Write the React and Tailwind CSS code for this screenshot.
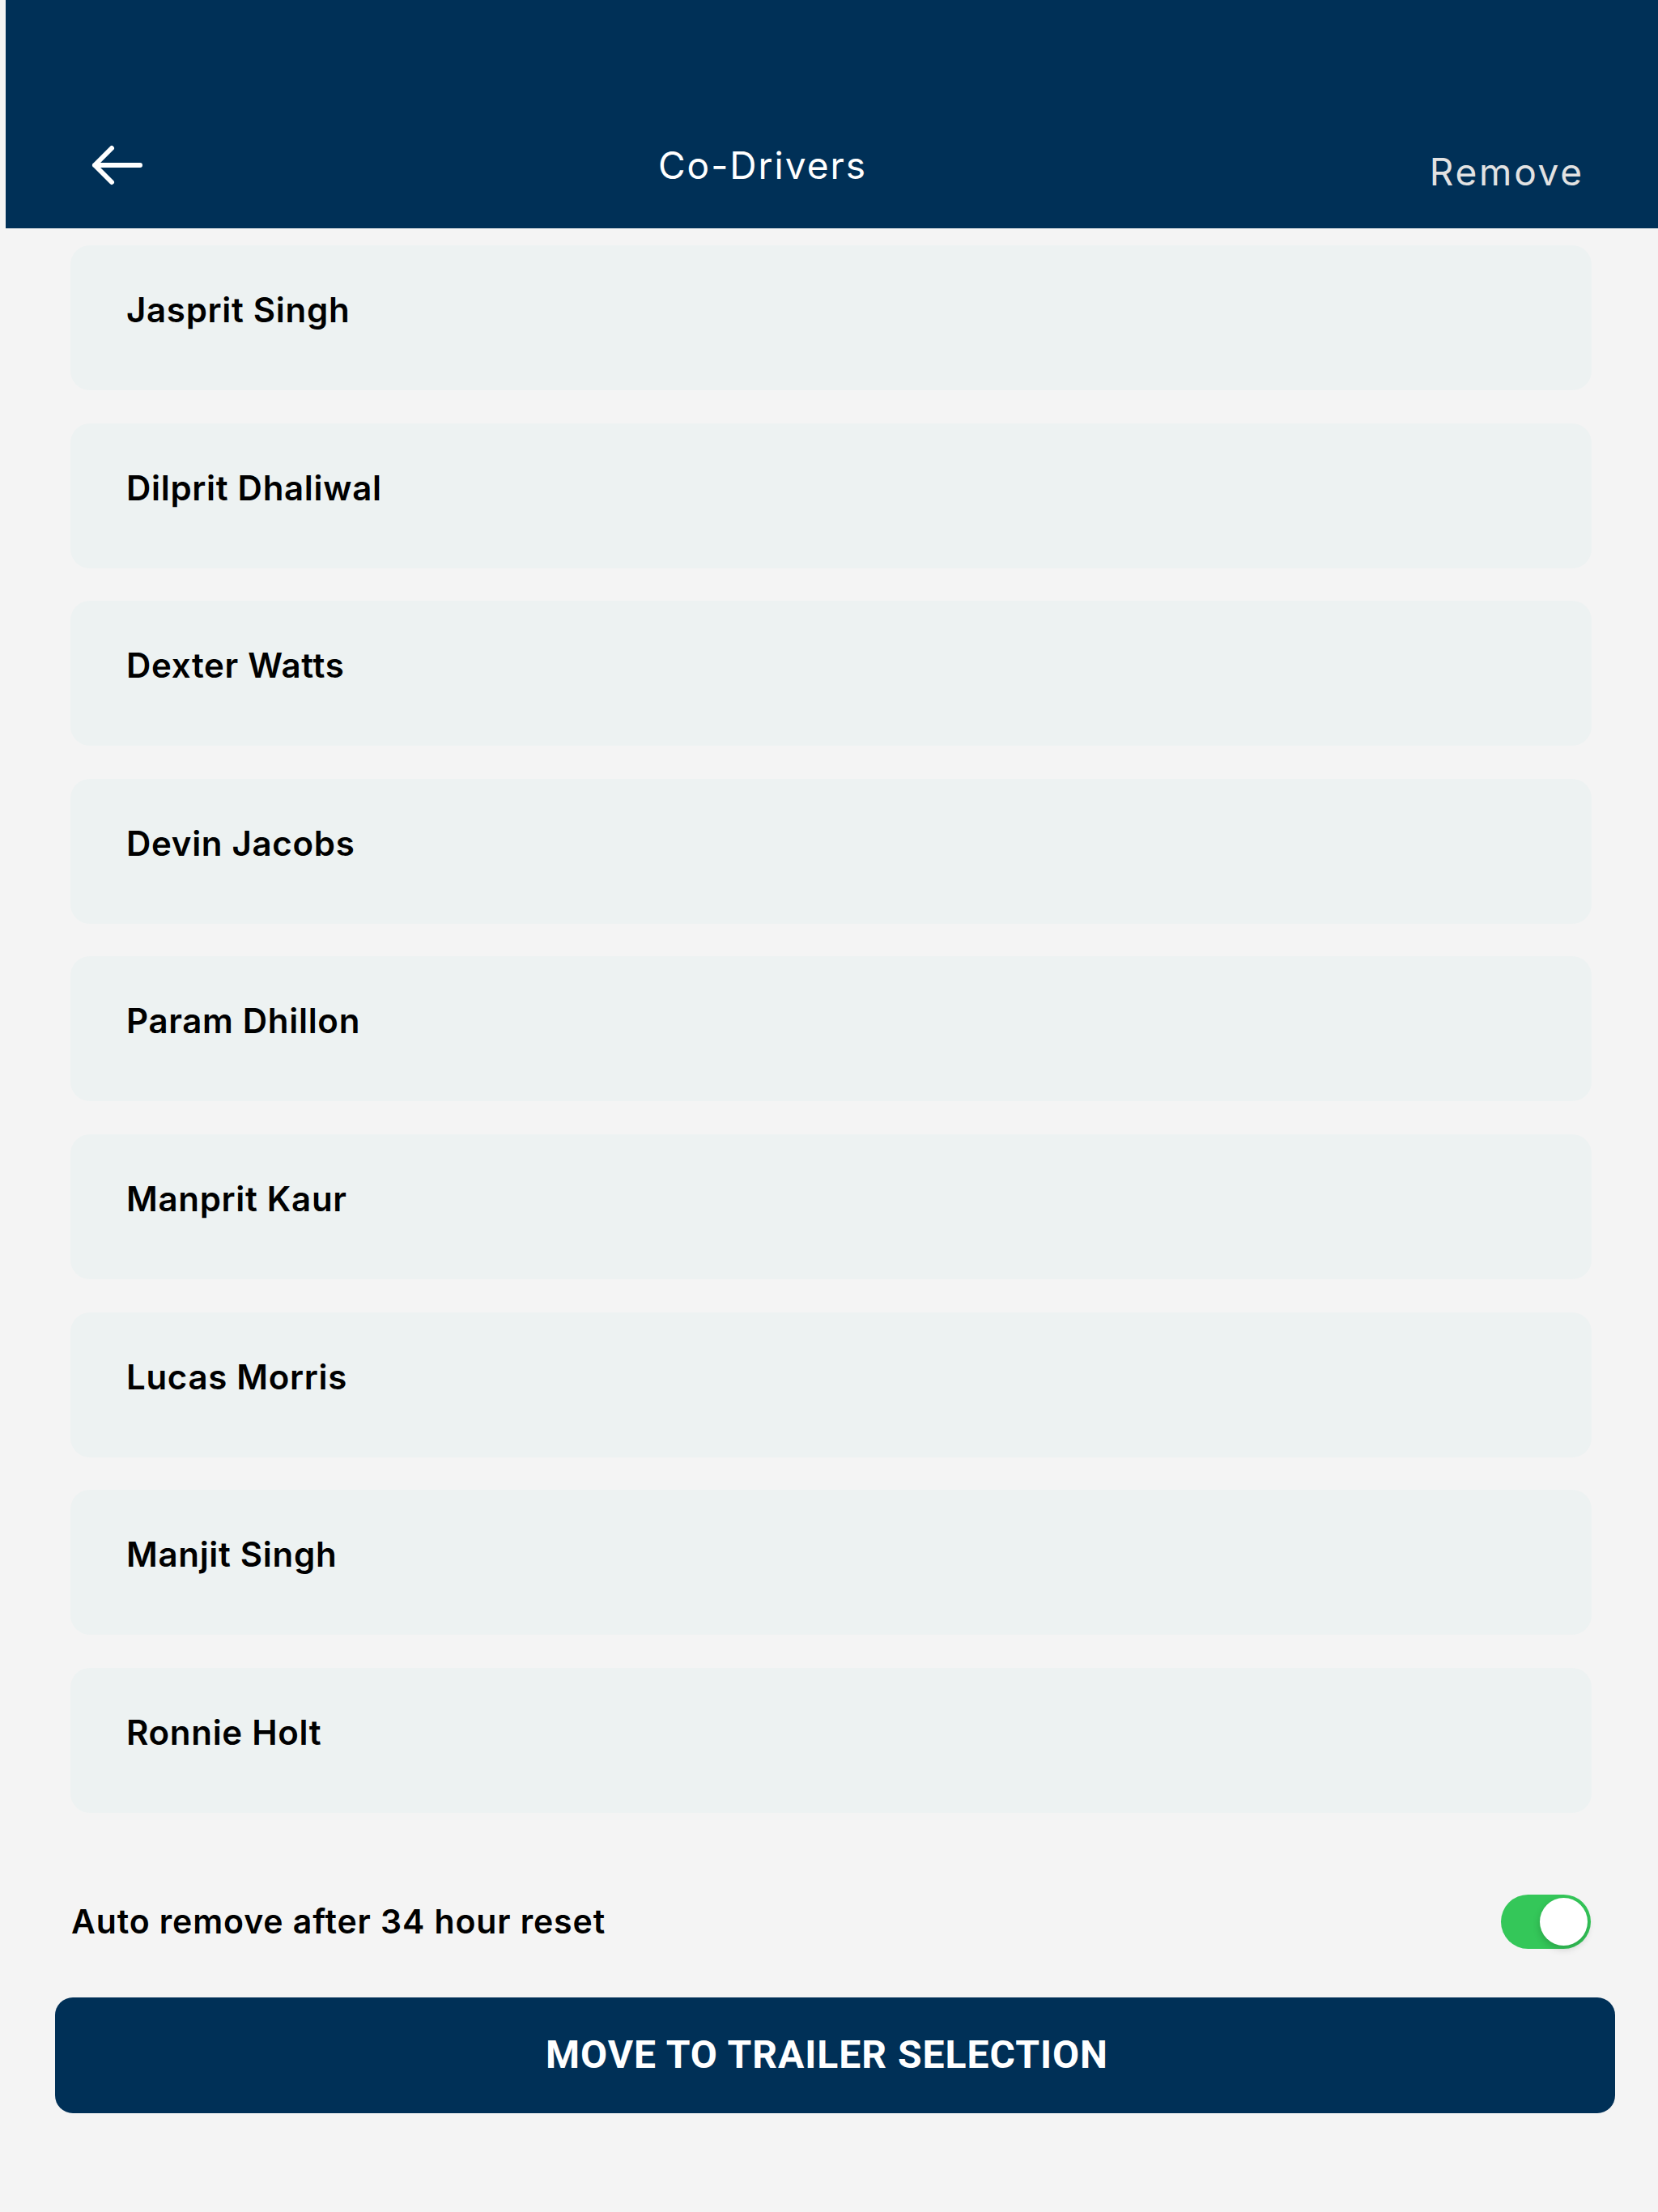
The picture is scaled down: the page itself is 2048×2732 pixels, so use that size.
import { useState } from 'react'

const coDrivers = [
  'Jasprit Singh',
  'Dilprit Dhaliwal',
  'Dexter Watts',
  'Devin Jacobs',
  'Param Dhillon',
  'Manprit Kaur',
  'Lucas Morris',
  'Manjit Singh',
  'Ronnie Holt',
]

function BackArrow() {
  return (
    <svg width="66" height="54" viewBox="0 0 66 54" fill="none">
      <path
        d="M27 6 L6 27 L27 48 M6 27 H62"
        stroke="white"
        strokeWidth="6"
        strokeLinecap="round"
        strokeLinejoin="round"
      />
    </svg>
  )
}

function Toggle({ on, onChange }) {
  return (
    <button
      onClick={() => onChange(!on)}
      className={`relative w-[111px] h-[67px] rounded-full transition-colors ${on ? 'bg-[#34c759]' : 'bg-[#d1d5db]'}`}
    >
      <span
        className={`absolute top-[4px] w-[59px] h-[59px] rounded-full bg-white shadow-[0_4px_10px_rgba(0,0,0,0.18)] transition-all ${on ? 'left-[48px]' : 'left-[4px]'}`}
      />
    </button>
  )
}

export default function App() {
  const [autoRemove, setAutoRemove] = useState(true)

  return (
    <div className="min-h-[2732px] w-full bg-[#f4f4f4] font-['Inter',sans-serif]">
      {/* Header */}
      <div className="ml-[7px] h-[282px] bg-[#003057] flex items-center pt-[126px] pl-[104px] pr-[91px]">
        <button className="w-[66px] h-[54px] flex items-center justify-center">
          <BackArrow />
        </button>
        <h1 className="ml-[636px] text-[46px] font-normal text-white tracking-[2px]">Co-Drivers</h1>
        <button className="ml-auto mt-[16px] text-[46px] font-normal text-[#e2e2e2] tracking-[2.8px]">Remove</button>
      </div>

      {/* Co-driver list */}
      <div className="mt-[21px] pl-[87px] pr-[82px] flex flex-col gap-[40.6px]">
        {coDrivers.map((name) => (
          <div
            key={name}
            className="h-[179px] rounded-[24px] bg-[#edf2f2] flex items-center pl-[69px] pb-[20px]"
          >
            <span className="text-[42px] font-semibold text-black tracking-[0.7px]">{name}</span>
          </div>
        ))}
      </div>

      {/* Auto remove setting */}
      <div className="mt-[101px] pl-[88px] pr-[83px] flex items-center justify-between h-[67px]">
        <span className="text-[41px] font-semibold text-black tracking-[0.9px]">Auto remove after 34 hour reset</span>
        <Toggle on={autoRemove} onChange={setAutoRemove} />
      </div>

      {/* Primary action */}
      <div className="mt-[60px] pl-[68px] pr-[53px]">
        <button className="w-full h-[143px] rounded-[22px] bg-[#003057] flex items-center justify-center pr-[20px]">
          <span className="text-[48px] font-bold text-white font-['Roboto',sans-serif] tracking-[1px]">MOVE TO TRAILER SELECTION</span>
        </button>
      </div>
    </div>
  )
}
